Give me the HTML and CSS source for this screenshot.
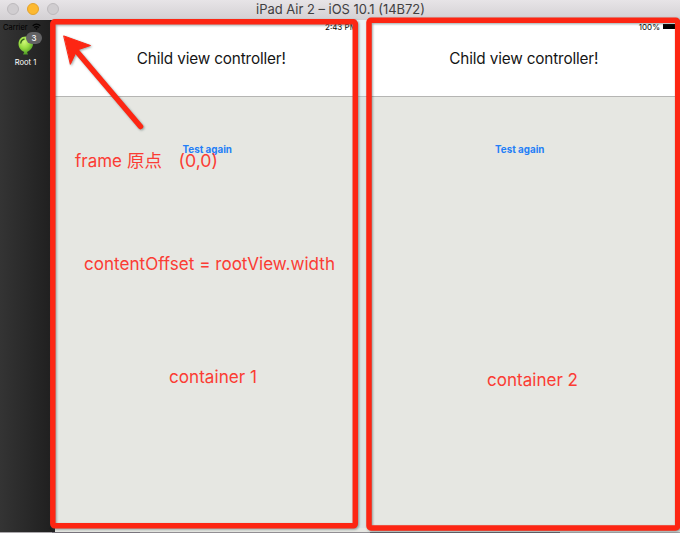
FILE: index.html
```html
<!DOCTYPE html>
<html lang="en">
<head>
<meta charset="utf-8">
<title>iPad Air 2 – iOS 10.1 (14B72)</title>
<link rel="stylesheet" href="styles.css">
</head>
<body>
<div class="window">
  <header class="titlebar">
    <div class="lights"><i></i><i class="amber"></i><i></i></div>
    <h1><svg width="190" height="20"><text x="0" y="14" textLength="169" lengthAdjust="spacingAndGlyphs">iPad Air 2 – iOS 10.1 (14B72)</text></svg></h1>
  </header>
  <div class="device">
    <aside class="sidebar">
      <div class="carrier"><span>Carrier</span>
        <svg width="9" height="8" viewBox="0 0 9 8"><path d="M.7 2.7Q4.5-.5 8.3 2.7M2.2 4.5Q4.5 2.6 6.8 4.5" fill="none" stroke="#000" stroke-width="1.3"/><path d="M3.3 5.6Q4.5 4.8 5.7 5.6L4.5 7z"/></svg>
      </div>
      <div class="tab">
        <svg class="balloon" width="18" height="20" viewBox="0 0 18 20">
          <defs><radialGradient id="green" cx="40%" cy="30%" r="70%"><stop offset="0" stop-color="#d0f878"/><stop offset=".5" stop-color="#98dc42"/><stop offset="1" stop-color="#4c9a25"/></radialGradient></defs>
          <path d="M8.5.5C3.900.5 1.500 4 1.500 8c0 4.400 3.400 7.200 5.800 8L6 18.500h5L10 16c2.700-1.200 6-4 6-8C16 3.500 13 .5 8.500.5z" fill="url(#green)"/>
          <path d="M3.700 7.500Q4 3.800 7.500 3" fill="none" stroke="#35641c" stroke-width="1.300"/>
        </svg>
        <b class="badge">3</b>
        <span class="tab-label">Root 1</span>
      </div>
    </aside>
    <main class="panes">
      <section class="pane">
        <div class="navbar"><span class="time">2:43 PM</span><h2>Child view controller!</h2></div>
        <button>Test again</button>
      </section>
      <section class="pane">
        <div class="navbar"><div class="power"><span>100%</span><i></i></div><h2>Child view controller!</h2></div>
        <button>Test again</button>
      </section>
    </main>
  </div>
  <footer class="backdrop"></footer>
</div>
<svg class="annotations" width="680" height="533" viewBox="0 0 680 533">
  <rect class="gutter" x="358" y="20" width="8" height="508"/>
  <g class="marks">
    <rect x="52.800" y="21.800" width="302.500" height="504" rx="2"/>
    <rect x="369" y="20.300" width="308.700" height="507.700" rx="2"/>
    <path class="shaft" d="M140.500 126.500L73 47"/>
    <path class="head" d="M64 36L90.500 45.500 77 50 70.500 64z"/>
  </g>
  <text x="75" y="167" textLength="47" lengthAdjust="spacingAndGlyphs">frame</text>
  <text x="127" y="167" textLength="35" lengthAdjust="spacingAndGlyphs">原点</text>
  <text x="178.500" y="167" textLength="39.500" lengthAdjust="spacingAndGlyphs">(0,0)</text>
  <text x="84" y="270" textLength="251" lengthAdjust="spacingAndGlyphs">contentOffset = rootView.width</text>
  <text x="169" y="383" textLength="88" lengthAdjust="spacingAndGlyphs">container 1</text>
  <text x="487" y="386" textLength="91" lengthAdjust="spacingAndGlyphs">container 2</text>
</svg>
</body>
</html>
```
FILE: styles.css
```css
* { box-sizing: border-box; }
body {
  margin: 0;
  width: 680px;
  height: 533px;
  overflow: hidden;
  font-family: Inter, "Noto Sans CJK SC", sans-serif;
}
.window { display: flex; flex-direction: column; height: 533px; }
.titlebar {
  flex: 0 0 20px;
  display: flex;
  background: linear-gradient(#e7e4e7, #d3d0d3);
}
.lights { display: flex; gap: 8px; padding: 3px 0 0 7px; width: 256px; }
.lights i {
  width: 12px;
  height: 12px;
  border: 1px solid #bdbabd;
  border-radius: 50%;
  background: #d0cdd0;
}
.lights .amber { background: #fdb930; border-color: #e3a22c; }
.titlebar h1 { margin: 0; font-size: 13.5px; font-weight: 400; line-height: 0; }
.titlebar text { fill: #414041; }
.device { flex: 1; display: flex; min-height: 0; }
.sidebar {
  flex: 0 0 55px;
  background: linear-gradient(90deg, #343434, #202020 50px);
}
.carrier { display: flex; gap: 4px; height: 12px; padding: 3px 0 0 3px; font-size: 7.5px; line-height: 9px; color: #000; }
.carrier span { width: 25px; }
.tab { position: relative; display: flex; flex-direction: column; align-items: center; width: 51px; padding-top: 4px; }
.badge {
  position: absolute;
  left: 26px;
  top: 0;
  width: 16px;
  height: 12px;
  border-radius: 6px;
  background: #626264;
  color: #fff;
  font-size: 8px;
  font-weight: 500;
  line-height: 12px;
  text-align: center;
}
.tab-label { margin-top: 1px; color: #fff; font-size: 7.6px; line-height: 12px; }
.panes { flex: 1; display: grid; grid-template-columns: 1fr 1fr; }
.pane { display: flex; flex-direction: column; align-items: center; background: #e6e7e2; }
.navbar {
  align-self: stretch;
  height: 77px;
  background: #fff;
  border-bottom: 1px solid #b5b5b3;
  display: grid;
  grid-template-rows: 12px 1fr;
}
.navbar h2 { margin: 17px 0 0; font-size: 15.3px; line-height: 20px; font-weight: 400; letter-spacing: -0.15px; color: #151515; text-align: center; }
.time { padding: 3px 0 0 270px; font-size: 8px; line-height: 9px; white-space: nowrap; }
.power { display: flex; gap: 3px; justify-content: flex-end; padding: 3px 4px 0 0; font-size: 8px; line-height: 9px; }
.power i { width: 13px; height: 5px; margin-top: 1px; background: #000; }
.pane button {
  margin: 45px 8px 0 0;
  padding: 0;
  border: 0;
  background: none;
  color: #247ff7;
  font: 700 9.8px/15px Inter, sans-serif;
}
.backdrop {
  flex: 0 0 1px;
  background: linear-gradient(90deg, #aaa7ab 52px, #77737c 52px 140px, #918e93 140px 370px, #625d66 370px 560px, #aaa7ab 560px);
}
.annotations { position: absolute; left: 0; top: 0; }
.annotations text { font-size: 17.5px; fill: #fb3c34; }
.gutter { fill: #c5dce2; fill-opacity: .35; }
.marks { fill: none; stroke: #fd2613; stroke-width: 5.5; stroke-linejoin: round; stroke-linecap: round; filter: drop-shadow(1px 1px 1px rgba(50, 80, 80, .5)); }
.marks .head { fill: #fd2613; stroke-width: 1; }
```
